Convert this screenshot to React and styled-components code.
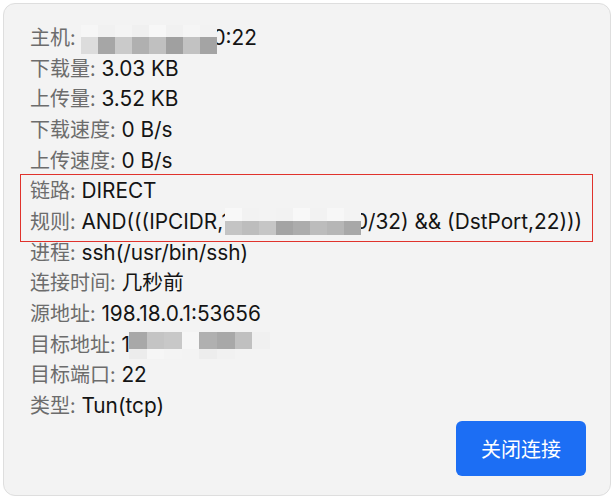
import React from 'react';
import styled, { createGlobalStyle } from 'styled-components';

const GlobalStyle = createGlobalStyle`
  html, body {
    margin: 0;
    padding: 0;
    background: #ffffff;
  }
  body {
    font-family: Inter, "Noto Sans CJK SC", sans-serif;
  }
`;

const Card = styled.div`
  margin: 3px 4px 4px 3px;
  display: flex;
  flex-direction: column;
  padding: 18px 24px 19px 26px;
  background: #f3f3f3;
  border: 1px solid #dedede;
  border-radius: 12px;
  box-sizing: border-box;
  height: 493px;
`;

const List = styled.div`
  display: flex;
  flex-direction: column;
`;

const Row = styled.div`
  font-size: 20px;
  line-height: 30.67px;
  height: 30.67px;
  white-space: nowrap;
  color: #141414;
`;

const Label = styled.span`
  color: #6c6c6c;
  font-family: "Noto Sans CJK SC", Inter, sans-serif;
`;

const Value = styled.span`
  font-size: 20.8px;
`;

const Highlight = styled.div`
  position: relative;
  display: flex;
  flex-direction: column;

  &::after {
    content: '';
    position: absolute;
    top: -1px;
    left: -10px;
    right: -7px;
    bottom: -5px;
    border: 1.5px solid #e0322c;
    pointer-events: none;
  }
`;

const Mosaic = styled.span`
  position: relative;
  z-index: 1;
  display: inline-flex;
  flex-direction: column;
  vertical-align: middle;
  margin-left: ${p => p.$ml || 0}px;
  margin-right: ${p => p.$mr || 0}px;
  top: ${p => p.$dy || 0}px;
`;

const MosaicRow = styled.span`
  display: flex;
  height: ${p => p.$h}px;
`;

const Cell = styled.span`
  display: block;
  height: 100%;
  background: ${p => p.$c};
`;

const Footer = styled.div`
  display: flex;
  justify-content: flex-end;
  margin-top: auto;
`;

const Button = styled.button`
  height: 55px;
  padding: 0 25px;
  border: none;
  border-radius: 6px;
  background: #1c6ef4;
  color: #ffffff;
  font-size: 20px;
  font-family: "Noto Sans CJK SC", sans-serif;
  cursor: pointer;
`;

const Blur = ({ rows, ml, mr, dy }) => (
  <Mosaic $ml={ml} $mr={mr} $dy={dy}>
    {rows.map((r, i) => (
      <MosaicRow key={i} $h={r.h}>
        {r.cells.map((c, j) => (
          <Cell key={j} $c={c} style={{ width: r.w[j] }} />
        ))}
      </MosaicRow>
    ))}
  </Mosaic>
);

const W8 = [17, 17, 17, 17, 17, 17, 17, 17];

const hostBlur = [
  { h: 12, w: W8, cells: ['#f6f6f6', '#f1f1f1', '#f4f4f4', '#f0f0f0', '#f7f7f7', '#f1f1f1', '#f5f5f5', '#f2f2f2'] },
  { h: 17, w: W8, cells: ['#dcdcdc', '#a6a6a6', '#cacaca', '#b0b0b0', '#c0c0c0', '#a0a0a0', '#c2c2c2', '#a4a4a4'] }
];

const ruleBlur = [
  { h: 13, w: W8, cells: ['#f8f8f8', '#f2f2f2', '#f3f3f3', '#f2f2f2', '#f8f8f8', '#f2f2f2', '#f7f7f7', '#f3f3f3'] },
  { h: 14, w: W8, cells: ['#c4c4c4', '#bdbdbd', '#c6c6c6', '#a4a4a4', '#acacac', '#bcbcbc', '#b6b6b6', '#a8a8a8'] }
];

const dstBlur = [
  { h: 17, w: [18, 17, 18, 17, 18, 18, 17, 18], cells: ['#a8a8a8', '#c4c4c4', '#c8c8c8', '#f6f6f6', '#b0b0b0', '#a8a8a8', '#c0c0c0', '#f0f0f0'] },
  { h: 10, w: [18, 17, 18, 17, 18, 18, 17, 18], cells: ['#ececec', '#f6f6f6', '#f4f4f4', '#f3f3f3', '#ededed', '#f1f1f1', '#f3f3f3', '#f3f3f3'] }
];

const topRows = [
  { label: '主机', value: <> <Blur rows={hostBlur} mr={-5} />0:22</> },
  { label: '下载量', value: ' 3.03 KB' },
  { label: '上传量', value: ' 3.52 KB' },
  { label: '下载速度', value: ' 0 B/s' },
  { label: '上传速度', value: ' 0 B/s' }
];

const markedRows = [
  { label: '链路', value: ' DIRECT' },
  {
    label: '规则',
    value: <> AND(((IPCIDR,1<Blur rows={ruleBlur} ml={-5} mr={-6} dy={-2} />0/32) &amp;&amp; (DstPort,22)))</>
  }
];

const bottomRows = [
  { label: '进程', value: ' ssh(/usr/bin/ssh)' },
  { label: '连接时间', value: ' 几秒前' },
  { label: '源地址', value: ' 198.18.0.1:53656' },
  { label: '目标地址', value: <> 1<Blur rows={dstBlur} ml={-1} /></> },
  { label: '目标端口', value: ' 22' },
  { label: '类型', value: ' Tun(tcp)' }
];

const InfoRow = ({ label, value }) => (
  <Row>
    <Label>{label}:</Label>
    <Value>{value}</Value>
  </Row>
);

const App = () => (
  <>
    <GlobalStyle />
    <Card>
      <List>
        {topRows.map(r => <InfoRow key={r.label} {...r} />)}
        <Highlight>
          {markedRows.map(r => <InfoRow key={r.label} {...r} />)}
        </Highlight>
        {bottomRows.map(r => <InfoRow key={r.label} {...r} />)}
      </List>
      <Footer>
        <Button>关闭连接</Button>
      </Footer>
    </Card>
  </>
);

export default App;
